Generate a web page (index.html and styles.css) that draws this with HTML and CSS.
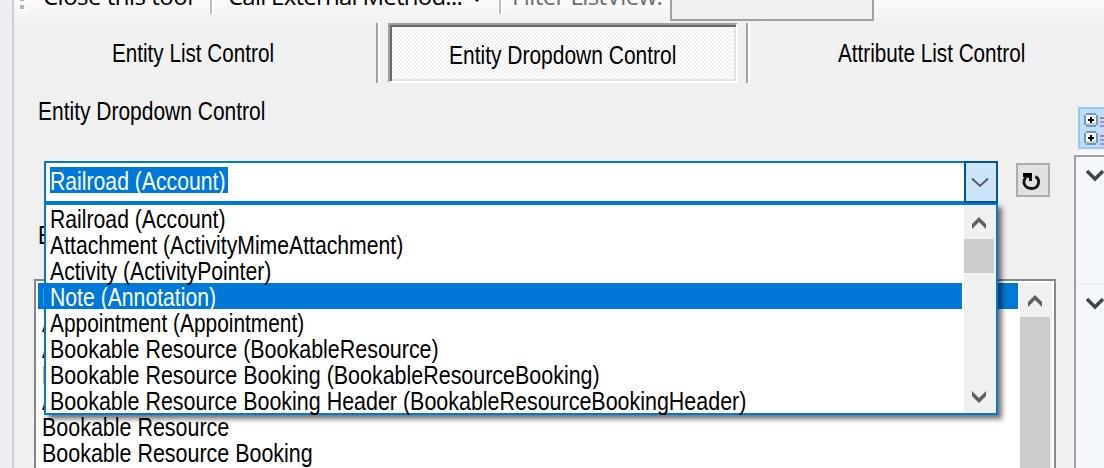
FILE: index.html
```
<!DOCTYPE html>
<html lang="en">
<head>
<meta charset="utf-8">
<title>Entity Dropdown Control</title>
<link rel="stylesheet" href="styles.css">
</head>
<body>
<div class="window">
  <div class="gutter"></div>
  <main class="content">
    <div class="toolbar">
      <svg class="grip" width="8" height="12" viewBox="0 0 8 12"><path fill="#fff" d="M2 0h4v3H2zM2 7h4v4H2z"/><path fill="#b4b4b4" d="M0 0h4v1H0zM0 5h4v4H0z"/></svg>
      <span class="tool tool-close">Close this tool</span>
      <i class="tool-sep"></i>
      <span class="tool tool-call">Call External Method...</span>
      <svg class="caret" width="6" height="3" viewBox="0 0 6 3"><path d="M1 0h4L3 2z"/></svg>
      <i class="tool-sep"></i>
      <span class="tool tool-filter">Filter ListView:</span>
      <div class="filter-box"></div>
    </div>
    <div class="tabs">
      <div class="tab"><span class="t tab-list">Entity List Control</span></div>
      <i class="tab-sep"></i>
      <div class="tab pressed"><span class="t tab-drop">Entity Dropdown Control</span></div>
      <i class="tab-sep"></i>
      <div class="tab tab-last"><span class="t tab-attr">Attribute List Control</span></div>
    </div>
    <div class="body">
      <section class="demo">
        <div class="heading"><span class="t tab-drop">Entity Dropdown Control</span></div>
        <div class="combo-row">
          <div class="combo">
            <div class="field"><mark><span class="t">Railroad (Account)</span></mark></div>
            <div class="drop"><svg width="18" height="12" viewBox="0 0 18 12"><path d="M1 1.5l8 7.5 8-7.5" fill="none" stroke="#555c63" stroke-width="2"/></svg></div>
            <div class="popup">
              <ul class="items">
                <li><span class="t">Railroad (Account)</span></li>
                <li><span class="t">Attachment (ActivityMimeAttachment)</span></li>
                <li><span class="t">Activity (ActivityPointer)</span></li>
                <li class="selected"><span class="t">Note (Annotation)</span></li>
                <li><span class="t narrow">Appointment (Appointment)</span></li>
                <li><span class="t wide">Bookable Resource (BookableResource)</span></li>
                <li><span class="t wide">Bookable Resource Booking (BookableResourceBooking)</span></li>
                <li><span class="t wide">Bookable Resource Booking Header (BookableResourceBookingHeader)</span></li>
              </ul>
              <div class="scroll">
                <svg class="arrow" width="14" height="12" viewBox="0 0 14 12"><path d="M0 7L7 0l7 7v5L7 5l-7 7z" fill="#606060"/></svg>
                <div class="thumb"></div>
                <svg class="arrow arrow-down" width="14" height="12" viewBox="0 0 14 12"><path d="M0 5l7 7 7-7V0L7 7 0 0z" fill="#606060"/></svg>
              </div>
            </div>
          </div>
          <div class="refresh"><svg width="22" height="20" viewBox="0 0 22 20"><path d="M5 5.5C1 9 3 16.5 10.500 16.500C18 16.500 20 8 14.500 4.500" fill="none" stroke="#111" stroke-width="2.800"/><path d="M2 1h9v8H8V6L2 5z" fill="#000"/></svg></div>
        </div>
        <div class="caption"><span class="t">Entities</span></div>
        <div class="listbox">
          <ul class="items">
            <li class="selected"><span class="t">Railroad</span></li>
            <li><span class="t">Attachment</span></li>
            <li><span class="t">Activity</span></li>
            <li><span class="t">Note</span></li>
            <li><span class="t">Appointment</span></li>
            <li><span class="t wide">Bookable Resource</span></li>
            <li><span class="t wide">Bookable Resource Booking</span></li>
          </ul>
          <div class="scroll">
            <svg class="arrow" width="14" height="12" viewBox="0 0 14 12"><path d="M0 7L7 0l7 7v5L7 5l-7 7z" fill="#606060"/></svg>
            <div class="thumb"></div>
          </div>
        </div>
      </section>
      <aside class="props">
        <div class="category">
          <svg width="26" height="42" viewBox="0 0 26 42"><path fill="#91c9f7" d="M0 0h26v42H0z"/><path fill="#c2ddf2" d="M2 2h24v38H2z"/>
            <g id="expander"><path fill="#659bd0" d="M8 6h10v2h2v10h-2v2H8v-2H6V8h2z"/><path fill="#fafafa" d="M8 8h10v10H8z"/><path fill="#cfcdc0" d="M10 16h8v2H8v-2z"/><path d="M12 10h2v2h2v2h-2v2h-2v-2h-2v-2h2z"/><path fill="#8e8a9c" d="M22 10h4v2h-4z"/><path fill="#9f91ce" d="M22 14h4v2h-4zM22 18h4v2h-4z"/></g>
            <use href="#expander" y="18"/></svg>
        </div>
        <div class="grid">
          <div class="grid-cell"><svg width="18" height="12" viewBox="0 0 18 12"><path d="M1 1l8 8 8-8" fill="none" stroke="#454648" stroke-width="3.6"/></svg></div>
          <div class="grid-cell"><svg width="18" height="12" viewBox="0 0 18 12"><path d="M1 1l8 8 8-8" fill="none" stroke="#454648" stroke-width="3.6"/></svg></div>
        </div>
      </aside>
    </div>
  </main>
</div>
</body>
</html>
```
FILE: styles.css
```
* { box-sizing: border-box; }
body { margin: 0; overflow: hidden; background: #f0f0f0; color: #000; }
svg { display: block; flex: none; }
.window { display: flex; width: 1104px; height: 468px; overflow: hidden; }
.gutter { flex: none; width: 14px; background: #eeeef2; border-right: 2px solid #cccedb; }
.content { width: 1090px; flex: none; }

/* Condensed UI face */
.t { display: inline-block; height: 26px; font: 26px/28px "Liberation Sans", Arial, sans-serif; white-space: pre; transform: scaleX(.815); transform-origin: 0 50%; }
.wide { transform: scaleX(.825); }
.narrow { transform: scaleX(.803); }
.tab-drop { transform: scaleX(.807); }
.tab-list, .tab-attr { transform: scaleX(.795); }

.toolbar { display: flex; height: 23px; padding-left: 6px; background: linear-gradient(#fbfbfb, #f0f0f0); overflow: hidden; }
.tool { flex: none; font: 24px/33px "Open Sans", sans-serif; white-space: pre; margin-top: -21px; height: 33px; }
.tool-close { width: 167px; margin-left: 15px; letter-spacing: -.5px; }
.tool-call { width: 246px; margin-left: 14px; letter-spacing: -.75px; }
.tool-filter { width: 158px; margin-left: 9px; color: #6d6d6d; letter-spacing: -.6px; }
.caret { width: 6px; margin-right: 19px; }
.tool-sep { flex: none; width: 4px; height: 14px; border-left: 2px solid #bdbdbd; border-right: 2px solid #fff; }
.filter-box { flex: none; width: 204px; height: 21px; border: 2px solid #a0a0a0; border-top: 0; background: #f0f0f0; }

.tabs { display: flex; height: 60px; }
.tab { flex: none; width: 362px; display: flex; padding: 16px 0 0 98px; }
.tab-sep { flex: none; width: 4px; border-left: 2px solid #a0a0a0; border-right: 2px solid #fff; }
.tab.pressed { width: 350px; margin: 0 8px; padding: 16px 0 0 59px; border: 2px solid; border-color: #a0a0a0 #fff #fff #a0a0a0; box-shadow: inset 2px 2px #696969, inset -2px -2px #e3e3e3; background: repeating-conic-gradient(#fff 0 25%, #f0f0f0 0 50%) 0 0 / 4px 4px; }
.tab-last { width: 354px; padding-left: 88px; }

.body { display: flex; height: 385px; }
.demo { flex: none; width: 1060px; padding-left: 20px; }
.heading { height: 78px; padding: 14px 0 0 4px; }
.combo-row { display: flex; height: 42px; padding-left: 10px; gap: 18px; }
.combo { position: relative; display: flex; width: 954px; flex: none; }
.field { width: 920px; border: 2px solid #0078d7; border-right: 0; background: #fff; padding: 4px; }
.field mark { display: block; width: 178px; height: 26px; background: #0078d7; color: #fff; overflow: hidden; }
.drop { width: 34px; border: 2px solid #005499; background: #cce4f7; padding: 14px 0 0 5px; }
.refresh { width: 34px; height: 34px; margin-top: 2px; border: 2px solid #adadad; background: #e1e1e1; padding: 7px 0 0 3px; }

.popup { position: absolute; z-index: 2; left: 0; top: 42px; display: flex; width: 954px; height: 212px; border: 2px solid #0078d7; background: #fff; box-shadow: 4px 4px 5px rgba(0,0,0,.55); }
.items { list-style: none; margin: 0; padding: 0; flex: none; }
.items li { height: 26px; padding-left: 4px; display: flex; }
.items .selected { background: #0078d7; color: #fff; }
.popup .items { width: 916px; margin-right: 2px; }
.scroll { flex: none; width: 32px; background: #f0f0f0; }
.scroll .arrow { margin: 12px 0 0 8px; }
.scroll .thumb { width: 30px; height: 34px; background: #cdcdcd; margin-top: 10px; }
.scroll .arrow-down { margin-top: 118px; }

.caption { height: 76px; padding: 18px 0 0 4px; }
.listbox { display: flex; width: 1022px; height: 200px; border: 2px solid #828790; background: #fff; padding: 2px; }
.listbox .items { width: 980px; margin-right: 2px; }
.listbox .thumb { height: 160px; }

.props { flex: none; width: 30px; }
.category { height: 72px; padding: 24px 0 0 4px; border-bottom: 4px solid #f8f8f8; }
.grid { border-left: 2px solid #a0a0a0; border-top: 2px solid #a0a0a0; height: 313px; background: #f4f7fc; }
.grid-cell { height: 128px; padding: 13px 0 0 10px; }
.grid-cell:first-child { border-bottom: 2px solid #f0f0f0; }
```
